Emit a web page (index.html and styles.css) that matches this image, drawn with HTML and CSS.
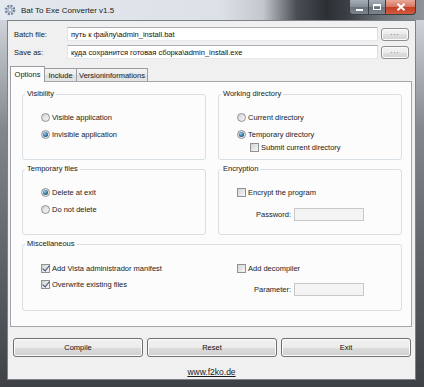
FILE: index.html
```html
<!DOCTYPE html>
<html>
	<head>
		<meta charset="UTF-8" />
		<title>Bat To Exe Converter v1.5</title>
		<link rel="stylesheet" href="styles.css">
	</head>
	<body>
<div class="window">
  <div class="titlebar">
    <svg class="app_icon" viewBox="0 0 12 12">
      <circle cx="6" cy="6" r="4" fill="none" stroke="#71849b" stroke-width="2.6" stroke-dasharray="1.9 1.24"/>
      <circle cx="6" cy="6" r="3.1" fill="#a9b6c6"/>
      <circle cx="6" cy="6" r="1.3" fill="#e4e9ef"/>
    </svg>
    <span class="title">Bat To Exe Converter v1.5</span>
    <div class="controls">
      <span class="ctl ctl_min"><i></i></span>
      <span class="ctl ctl_max"><i></i></span>
      <span class="ctl ctl_close">
        <svg viewBox="0 0 10 8" width="10" height="8"><path d="M1.5 0.8 L8.5 7.2 M8.5 0.8 L1.5 7.2" stroke="#fff" stroke-width="2"/></svg>
      </span>
    </div>
  </div>

  <div class="client">
    <div class="file_row">
      <label class="file_label">Batch file:</label>
      <input class="path" type="text" value="путь к файлу\admin_install.bat" />
      <button class="browse">...</button>
    </div>
    <div class="file_row">
      <label class="file_label">Save as:</label>
      <input class="path" type="text" value="куда сохранится готовая сборка\admin_install.exe" />
      <button class="browse">...</button>
    </div>

    <div class="tabs">
      <span class="tab tab_active tab_options">Options</span>
      <span class="tab tab_include">Include</span>
      <span class="tab tab_version">Versioninformations</span>
    </div>

    <div class="panel">
      <div class="groups">
        <fieldset class="group">
          <legend>Visibility</legend>
          <div class="opts">
            <label class="opt"><input type="radio" name="vis" />Visible application</label>
            <label class="opt"><input type="radio" name="vis" checked />Invisible application</label>
          </div>
        </fieldset>

        <fieldset class="group">
          <legend>Working directory</legend>
          <div class="opts">
            <label class="opt"><input type="radio" name="wd" />Current directory</label>
            <label class="opt"><input type="radio" name="wd" checked />Temporary directory</label>
            <label class="opt opt_sub"><input type="checkbox" />Submit current directory</label>
          </div>
        </fieldset>

        <fieldset class="group">
          <legend>Temporary files</legend>
          <div class="opts">
            <label class="opt"><input type="radio" name="tmp" checked />Delete at exit</label>
            <label class="opt"><input type="radio" name="tmp" />Do not delete</label>
          </div>
        </fieldset>

        <fieldset class="group">
          <legend>Encryption</legend>
          <div class="opts">
            <label class="opt"><input type="checkbox" />Encrypt the program</label>
            <div class="field_row">
              <span class="field_label">Password:</span>
              <input class="field" type="text" disabled />
            </div>
          </div>
        </fieldset>

        <fieldset class="group group_wide">
          <legend>Miscellaneous</legend>
          <div class="misc_cols">
            <div class="misc_left">
              <label class="opt opt_misc"><input type="checkbox" checked />Add Vista administrador manifest</label>
              <label class="opt opt_misc"><input type="checkbox" checked />Overwrite existing files</label>
            </div>
            <div class="misc_right">
              <label class="opt opt_misc"><input type="checkbox" />Add decompiler</label>
              <div class="field_row">
                <span class="field_label">Parameter:</span>
                <input class="field" type="text" disabled />
              </div>
            </div>
          </div>
        </fieldset>
      </div>
    </div>

    <div class="actions">
      <button class="action">Compile</button>
      <button class="action">Reset</button>
      <button class="action">Exit</button>
    </div>
    <a class="site_link" href="#">www.f2ko.de</a>
  </div>
</div>
	</body>
</html>
```

FILE: styles.css
```css
* {
	margin: 0;
	padding: 0;
	box-sizing: border-box;
}

body {
	width: 424px;
	height: 387px;
	overflow: hidden;
	font-family: "Liberation Sans", Arial, sans-serif;
	font-size: 7.5px;
	color: #1a1a1a;
}

.window {
	height: 387px;
	display: flex;
	flex-direction: column;
	background: linear-gradient(180deg, #dde2e8 0px, #b9bec4 50px, #83878d 130px, #62666b 250px, #3e4145 387px);
}

/* title bar */
.titlebar {
	height: 20px;
	display: flex;
	align-items: center;
	padding-left: 4px;
	background: linear-gradient(90deg, #e4e9ef 0%, #dce1e7 52%, #c4c8cd 62%, #4a4e54 70%, #2c3035 77%, #3c4046 82%, #6e737a 90%, #8f949b 100%);
}

.app_icon {
	width: 12px;
	height: 12px;
	flex: none;
}

.title {
	margin-left: 5px;
	font-size: 8px;
	color: #1b1b1b;
}

.controls {
	margin-left: auto;
	margin-right: 8px;
	align-self: flex-start;
	display: flex;
	height: 15px;
}

.ctl {
	display: grid;
	place-items: center;
	height: 15px;
	border: 1px solid #3a3f46;
	border-top: none;
}

.ctl_min,
.ctl_max {
	background: linear-gradient(#a6adb6, #848c96 50%, #6a727c 50%, #7b838d);
}

.ctl_min {
	width: 19px;
	border-right: none;
	border-radius: 0 0 0 4px;
}

.ctl_min i {
	width: 7px;
	height: 2px;
	margin-top: 5px;
	background: #fff;
}

.ctl_max {
	width: 18px;
}

.ctl_max i {
	width: 8px;
	height: 6px;
	border: 1px solid #fff;
	border-top-width: 2px;
}

.ctl_close {
	width: 30px;
	border-left: none;
	border-radius: 0 0 4px 0;
	background: linear-gradient(#e9a897, #d6745f 50%, #c23f24 50%, #d45a3e);
}

/* client area */
.client {
	flex: 1;
	margin: 0 8px 7px 7px;
	background: #f0f0f0;
	border: 1px solid #7d8288;
	display: flex;
	flex-direction: column;
}

.file_row {
	display: flex;
	align-items: center;
	height: 14px;
	margin: 4px 6px 0 6px;
}

.file_row:first-child {
	margin-top: 6px;
}

.file_label {
	width: 53px;
	flex: none;
}

.path {
	width: 311px;
	height: 14px;
	flex: none;
	padding: 0 3px;
	font-family: inherit;
	font-size: 7.5px;
	color: #111;
	background: #fff;
	border: 1px solid;
	border-color: #abadb3 #dbdfe6 #e3e9ef #e2e3ea;
	outline: none;
}

.browse {
	width: 28px;
	height: 13px;
	margin-left: 3px;
	flex: none;
	display: grid;
	place-items: center;
	padding: 0 0 3px;
	font-family: inherit;
	font-size: 8px;
	line-height: 8px;
	letter-spacing: 1px;
	color: #666;
	border: 1px solid #8e8f91;
	border-radius: 3px;
	background: linear-gradient(#f4f4f4, #ebebeb 50%, #dfdfdf 50%, #d3d3d3);
	box-shadow: inset 0 0 0 1px #fafafa;
}

/* tabs */
.tabs {
	display: flex;
	align-items: flex-end;
	height: 16px;
	margin: 7px 0 -1px 2px;
}

.tab {
	height: 14px;
	display: flex;
	align-items: center;
	justify-content: center;
	border: 1px solid #9a9da4;
	border-bottom: none;
	margin-right: -1px;
	background: linear-gradient(#f3f3f3, #ebebeb 50%, #dedede 50%, #e6e6e6);
}

.tab_active {
	height: 16px;
	position: relative;
	z-index: 1;
	background: #fcfcfc;
}

.tab_options {
	width: 35px;
}

.tab_include {
	width: 33px;
}

.tab_version {
	width: 72px;
}

.panel {
	height: 246px;
	margin: 0 3px 0 2px;
	border: 1px solid #a3a6ad;
	background: #fcfcfc;
}

.groups {
	display: grid;
	grid-template-columns: 184px 184px;
	grid-template-rows: 71px 71px 72px;
	column-gap: 12px;
	row-gap: 4px;
	padding: 7px 0 0 11px;
}

.group {
	min-width: 0;
	border: 1px solid #d8dfe4;
	border-radius: 3px;
	padding: 0;
}

.group legend {
	margin-left: 2px;
	padding: 0 2px;
	line-height: 10px;
	color: #1a1a1a;
}

.group_wide {
	grid-column: 1 / -1;
}

.opts {
	padding: 10px 0 0 18px;
}

.opt {
	display: flex;
	align-items: center;
	gap: 2px;
	height: 17px;
}

.opt_sub {
	height: 13px;
	margin-top: -2px;
	padding-left: 13px;
}

.opt_misc {
	height: 16px;
}

.field_row {
	display: flex;
	align-items: center;
	height: 15px;
	margin-top: 6px;
	padding-left: 17px;
}

.field_label {
	width: 37px;
	text-align: right;
}

.field {
	width: 70px;
	height: 13px;
	margin-left: 3px;
	background: #f4f4f4;
	border: 1px solid #c6c8cc;
}

.misc_cols {
	display: grid;
	grid-template-columns: 195px 1fr;
	padding-top: 11px;
}

.misc_left {
	padding-left: 18px;
}

.misc_right {
	padding-left: 19px;
}

/* radio and check boxes */
input[type="radio"],
input[type="checkbox"] {
	appearance: none;
	width: 9px;
	height: 9px;
	flex: none;
	display: inline-grid;
	place-content: center;
	border: 1px solid #8f9194;
	background: linear-gradient(135deg, #d2d4d6, #f7f7f7);
}

input[type="radio"] {
	border-radius: 50%;
}

input[type="radio"]:checked::after {
	content: "";
	width: 5px;
	height: 5px;
	border-radius: 50%;
	background: radial-gradient(circle at 40% 35%, #9ad8f7, #2a6a92 55%, #143f5e);
}

input[type="checkbox"]:checked::after {
	content: "";
	width: 3px;
	height: 6px;
	margin-top: -2px;
	border: solid #3b4c73;
	border-width: 0 1.5px 1.5px 0;
	transform: rotate(40deg);
}

/* bottom buttons */
.actions {
	display: grid;
	grid-template-columns: repeat(3, 130px);
	gap: 4px;
	height: 19px;
	margin: 11px 0 0 5px;
}

.action {
	font-family: inherit;
	font-size: 7.5px;
	color: #111;
	border: 1px solid #707070;
	border-radius: 3px;
	background: linear-gradient(#f2f2f2, #ebebeb 50%, #dddddd 50%, #cfcfcf);
	box-shadow: inset 0 0 0 1px #fbfbfb;
}

.site_link {
	align-self: center;
	margin-top: 10px;
	font-size: 8.5px;
	line-height: 10px;
	color: #1a1a1a;
	text-decoration: underline;
}
```
